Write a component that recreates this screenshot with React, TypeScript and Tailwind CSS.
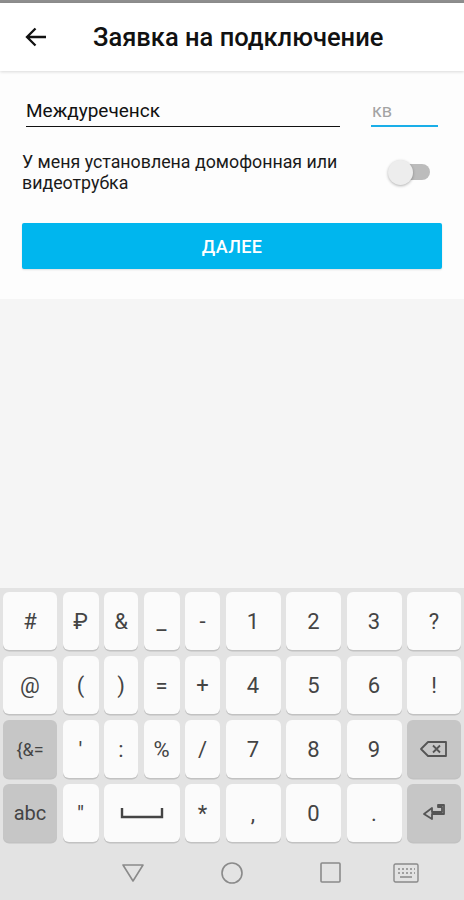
import React from 'react';

type Key = { label?: string; kind?: 'char' | 'fn'; icon?: 'backspace' | 'enter' | 'space' };

const rows: Key[][] = [
  [{ label: '#' }, { label: '₽' }, { label: '&' }, { label: '_' }, { label: '-' }, { label: '1' }, { label: '2' }, { label: '3' }, { label: '?' }],
  [{ label: '@' }, { label: '(' }, { label: ')' }, { label: '=' }, { label: '+' }, { label: '4' }, { label: '5' }, { label: '6' }, { label: '!' }],
  [{ label: '{&=', kind: 'fn' }, { label: "'" }, { label: ':' }, { label: '%' }, { label: '/' }, { label: '7' }, { label: '8' }, { label: '9' }, { kind: 'fn', icon: 'backspace' }],
];

function KeyIcon({ icon }: { icon: Key['icon'] }) {
  if (icon === 'backspace') {
    return (
      <svg width="30" height="20" viewBox="0 0 30 20" fill="none" stroke="#555" strokeWidth="1.8">
        <path d="M9 3h18v14H9L2 10z" strokeLinejoin="round" />
        <path d="M14 6.5l7 7M21 6.5l-7 7" />
      </svg>
    );
  }
  if (icon === 'enter') {
    return (
      <svg width="26" height="22" viewBox="0 0 26 22" fill="none" stroke="#555" strokeWidth="1.8" strokeLinejoin="round">
        <path d="M17 3h6v9H11v5L3 12l8-6v4h10V5h-4z" />
      </svg>
    );
  }
  return (
    <svg width="44" height="12" viewBox="0 0 44 12" fill="none" stroke="#444" strokeWidth="2.4">
      <path d="M2 1v9h40V1" />
    </svg>
  );
}

function KeyCap({ k, className = '' }: { k: Key; className?: string }) {
  const fn = k.kind === 'fn';
  return (
    <div
      className={`flex items-center justify-center rounded-[6px] shadow-[0_1.5px_0_#c2c2c2] text-[#444] ${
        fn ? 'bg-[#c6c6c6]' : 'bg-[#fbfbfb]'
      } ${className}`}
    >
      {k.icon ? <KeyIcon icon={k.icon} /> : <span className={fn ? 'text-[18px]' : 'text-[22px]'}>{k.label}</span>}
    </div>
  );
}

export default function App() {
  return (
    <div className="w-[464px] h-[900px] flex flex-col bg-[#f5f5f5] overflow-hidden" style={{ fontFamily: 'Roboto, "Noto Sans", sans-serif' }}>
      <div className="h-[3px] bg-[#8e8e8e]" />

      {/* Header */}
      <div className="h-[68px] bg-white flex items-center shadow-[0_1px_3px_rgba(0,0,0,0.14)] relative z-10">
        <svg className="ml-[25px]" width="22" height="20" viewBox="0 0 22 20" fill="none" stroke="#111" strokeWidth="2.3">
          <path d="M21 10H2M10.5 1.5L2 10l8.5 8.5" />
        </svg>
        <h1 className="ml-[46px] text-[25.5px] font-medium text-[#111]">Заявка на подключение</h1>
      </div>

      {/* Form */}
      <div className="bg-[#fdfdfd] h-[228px] px-[22px] pt-[28px] flex flex-col">
        <div className="flex items-end">
          <div className="w-[314px] ml-[4px] border-b-[1.5px] border-[#111] pb-[3px] text-[19px] text-[#111] leading-[24px]">Междуреченск</div>
          <div className="ml-[31px] w-[67px] border-b-2 border-[#1aaee8] pb-[2px] pl-[1px] text-[18px] text-[#a3a3a3] leading-[24px]">кв</div>
        </div>

        <div className="mt-[24px] flex items-center">
          <p className="flex-1 text-[17.8px] leading-[21px] text-[#1a1a1a]">
            У меня установлена домофонная или
            <br />
            видеотрубка
          </p>
          <div className="relative w-[44px] h-[26px] mr-[10px] flex items-center">
            <div className="absolute left-[12px] right-[2px] h-[16px] rounded-full bg-[#bcbcbc]" />
            <div className="absolute left-0 w-[25px] h-[25px] rounded-full bg-[#ededed] shadow-[0_1px_3px_rgba(0,0,0,0.3)]" />
          </div>
        </div>

        <button className="mt-[30px] h-[46px] w-full rounded-[2px] bg-[#00b6ee] text-white text-[18px] font-medium tracking-[0.3px] shadow-[0_1px_2px_rgba(0,0,0,0.12)]">
          ДАЛЕЕ
        </button>
      </div>

      <div className="flex-1" />

      {/* Keyboard */}
      <div className="bg-[#e3e3e3] pt-[4px] pb-[5px] px-[3px]">
        <div className="grid grid-cols-[54px_36px_34px_36px_35px_55px_55px_55px_54px] justify-between gap-y-[6px] auto-rows-[58px]">
          {rows.map((row, ri) => row.map((k, ci) => <KeyCap key={`${ri}-${ci}`} k={k} />))}
          <KeyCap k={{ label: 'abc', kind: 'fn' }} className="[&>span]:text-[20px]" />
          <KeyCap k={{ label: '"' }} />
          <KeyCap k={{ icon: 'space' }} className="col-span-2" />
          <KeyCap k={{ label: '*' }} />
          <KeyCap k={{ label: ',' }} />
          <KeyCap k={{ label: '0' }} />
          <KeyCap k={{ label: '.' }} />
          <KeyCap k={{ kind: 'fn', icon: 'enter' }} />
        </div>
      </div>

      {/* Nav bar */}
      <div className="h-[53px] bg-[#e3e3e3] relative">
        <svg className="absolute left-[121px] top-[16px]" width="24" height="20" viewBox="0 0 24 20" fill="none" stroke="#8a8a8a" strokeWidth="1.6" strokeLinejoin="round">
          <path d="M2 2h20L12 18z" />
        </svg>
        <svg className="absolute left-[221px] top-[15px]" width="22" height="22" viewBox="0 0 22 22" fill="none" stroke="#8a8a8a" strokeWidth="1.6">
          <circle cx="11" cy="11" r="10" />
        </svg>
        <svg className="absolute left-[320px] top-[15px]" width="21" height="21" viewBox="0 0 21 21" fill="none" stroke="#8a8a8a" strokeWidth="1.6">
          <rect x="1" y="1" width="19" height="19" rx="1" />
        </svg>
        <svg className="absolute left-[393px] top-[16px]" width="26" height="20" viewBox="0 0 26 20" fill="none" stroke="#8a8a8a" strokeWidth="1.4">
          <rect x="1" y="1" width="24" height="18" rx="1.5" />
          <path d="M5 6h2M9 6h2M13 6h2M17 6h2M21 6h1M5 10h2M9 10h2M13 10h2M17 10h2M21 10h1M7 14h12" />
        </svg>
      </div>
    </div>
  );
}
